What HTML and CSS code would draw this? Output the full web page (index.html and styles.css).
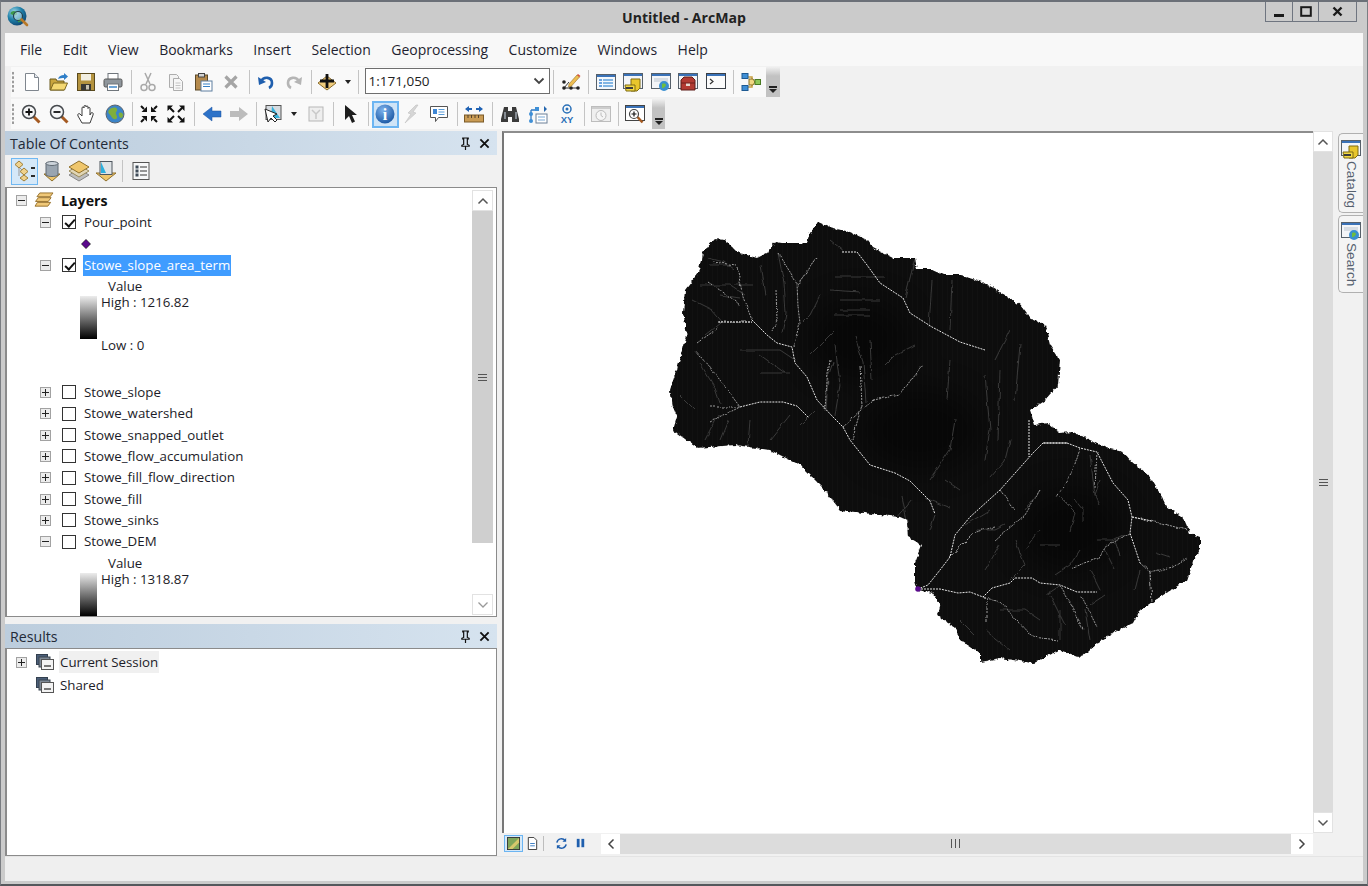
FILE: index.html
```html
<!DOCTYPE html>
<html lang="en">
<head>
<meta charset="utf-8">
<title>Untitled - ArcMap</title>
<link rel="stylesheet" href="styles.css">
</head>
<body>
<div class="window">
  <header class="titlebar">
    <div class="title-left">
      <svg class="logo" viewBox="0 0 22 22"><defs><radialGradient id="gl" cx=".35" cy=".3" r=".8"><stop offset="0" stop-color="#9fd8e8"/><stop offset=".5" stop-color="#1f80a8"/><stop offset="1" stop-color="#0d3d6a"/></radialGradient></defs><circle cx="10" cy="10" r="9.5" fill="url(#gl)"/><path d="M4 6c3-2 5-1 6 1s-2 3-4 2-3 0-2-3zM11 13c2-1 4 0 4 1s-3 3-4 2z" fill="#3d9a4a"/><circle cx="11" cy="10" r="4.5" fill="#cfeaf2" fill-opacity=".55" stroke="#23404f" stroke-width="1.2"/><path d="M14.5 13.5l5.5 5.5" stroke="#b8792a" stroke-width="2.6" stroke-linecap="round"/></svg>
    </div>
    <div class="title-text">Untitled - ArcMap</div>
    <div class="winbtns">
      <div class="wb wb-min"><svg viewBox="0 0 14 14"><rect x="2" y="9" width="10" height="3" fill="#1a1a1a"/></svg></div>
      <div class="wb wb-max"><svg viewBox="0 0 14 14"><rect x="2.2" y="2.2" width="9.6" height="8.6" fill="none" stroke="#1a1a1a" stroke-width="2"/></svg></div>
      <div class="wb wb-close"><svg viewBox="0 0 14 14"><path d="M2.5 2.5l8 8M10.500 2.500l-8 8" stroke="#1a1a1a" stroke-width="2.400"/></svg></div>
    </div>
  </header>

  <div class="client">
    <nav class="menubar">
      <span>File</span><span>Edit</span><span>View</span><span>Bookmarks</span><span>Insert</span><span>Selection</span><span>Geoprocessing</span><span>Customize</span><span>Windows</span><span>Help</span>
    </nav>

    <div class="toolrow">
      <div class="toolbar tb1">
        <div class="grip"></div>
        <div class="b"><svg viewBox="0 0 20 20"><path d="M3.500 1.500h9l4 4v13h-13z" fill="#fff" stroke="#7f868e"/><path d="M12.500 1.500v4h4" fill="#e4e8ee" stroke="#7f868e"/></svg></div>
        <div class="b"><svg viewBox="0 0 20 20"><path d="M1 7h6l1 2h7v9H1z" fill="#c9a53e" stroke="#6b5a1c"/><path d="M1.500 18l3-7h14l-3 7z" fill="#f4d872" stroke="#7b6620"/><path d="M9 7c1-3 3-4 6-4V1l4 3.500L15 8V6c-2 0-4 0-6 1z" fill="#2f7fc8"/></svg></div>
        <div class="b"><svg viewBox="0 0 20 20"><rect x="1.500" y="1.500" width="17" height="17" fill="#b4933f" stroke="#5a4a1e"/><rect x="5" y="2" width="10" height="6.500" fill="#f2efe2"/><rect x="5" y="12" width="10" height="6.500" fill="#3a3a36"/><rect x="10" y="13" width="3" height="4.500" fill="#c9c4b2"/></svg></div>
        <div class="b"><svg viewBox="0 0 20 20"><rect x="5" y="1.500" width="10" height="6" fill="#fff" stroke="#70767c"/><rect x="1" y="7" width="18" height="8" rx="1.500" fill="#8f969c" stroke="#555"/><rect x="4.500" y="12" width="11" height="6.500" fill="#fff" stroke="#70767c"/><path d="M6 15h8" stroke="#3c86c8" stroke-width="1.500"/></svg></div>
        <div class="sep s8"></div>
        <div class="b b5"><svg viewBox="0 0 20 20" class="off"><path d="M7 1l5 11M13 1L8 12" stroke="#a9a9a9" stroke-width="1.500"/><circle cx="6" cy="15.500" r="3" fill="none" stroke="#a9a9a9" stroke-width="1.500"/><circle cx="14" cy="15.500" r="3" fill="none" stroke="#a9a9a9" stroke-width="1.500"/></svg></div>
        <div class="b b5"><svg viewBox="0 0 20 20"><path d="M3.500 2.500h7l2 2v11h-9z" fill="#f3f3f3" stroke="#adadad"/><path d="M7.500 6.500h6l3 3v9h-9z" fill="#f7f7f7" stroke="#adadad"/><path d="M9.500 11h5M9.500 13.500h5M9.500 16h5" stroke="#c4c4c4"/></svg></div>
        <div class="b b5"><svg viewBox="0 0 20 20"><rect x="2.500" y="3" width="12" height="15" fill="#b58a4d" stroke="#5d4a2a"/><rect x="5.500" y="1.500" width="6" height="3.500" fill="#d4d4d4" stroke="#444"/><rect x="8" y="9" width="11" height="10" fill="#fff" stroke="#5e7fa0"/><path d="M10 12h7M10 14.500h7" stroke="#3480c6" stroke-width="1.200"/></svg></div>
        <div class="b b5"><svg viewBox="0 0 20 20"><path d="M4.500 4.500l11 11M15.500 4.500l-11 11" stroke="#a5a5a5" stroke-width="3.200"/></svg></div>
        <div class="sep s8"></div>
        <div class="b b5"><svg viewBox="0 0 20 20"><path d="M5 9c3-5 11-4 11 2 0 2-1 4-3 5" fill="none" stroke="#1f5fae" stroke-width="2.600"/><path d="M2 5l1 8 7-3z" fill="#1f5fae"/></svg></div>
        <div class="b b5"><svg viewBox="0 0 20 20"><path d="M15 9C12 4 4 5 4 11c0 2 1 4 3 5" fill="none" stroke="#b5b5b5" stroke-width="2.600"/><path d="M18 5l-1 8-7-3z" fill="#b5b5b5"/></svg></div>
        <div class="sep s6"></div>
        <div class="b"><svg viewBox="0 0 20 20"><path d="M10 4l9 7-9 7-9-7z" fill="#f0cc7c" stroke="#8a6c2c"/><path d="M10 2v14M3 9h14" stroke="#111" stroke-width="2.800"/></svg></div>
        <div class="drop"></div>
        <div class="sep s6"></div>
        <div class="combo"><span>1:171,050</span><svg viewBox="0 0 12 8"><path d="M1.500 1.500l4.500 4.500 4.500-4.500" fill="none" stroke="#444" stroke-width="1.800"/></svg></div>
        <div class="sep s75"></div>
        <div class="b"><svg viewBox="0 0 20 20"><path d="M2 16h16M3 16l5-6" stroke="#333"/><g fill="#222"><circle cx="3" cy="16" r="1.800"/><circle cx="10" cy="16" r="1.800"/><circle cx="17" cy="16" r="1.800"/><circle cx="3" cy="10" r="1.800"/></g><path d="M8 12L16 3l2.500 2-8 9-3 1z" fill="#eebe52" stroke="#936f1f" stroke-width=".6"/><path d="M16 3l1-1 2.500 2-1 1z" fill="#d94d36"/></svg></div>
        <div class="sep s8"></div>
        <div class="b b5"><svg viewBox="0 0 20 20"><rect x="0.500" y="2.500" width="19" height="15" fill="#f4f8fc" stroke="#56606a"/><rect x="1" y="3" width="18" height="2" fill="#3a72b8"/><path d="M3 8h3M3 11h3M3 14h3" stroke="#3e86d4" stroke-width="1.500"/><path d="M7 8h10M7 11h10M7 14h10" stroke="#5da0dc" stroke-width="1.300"/></svg></div>
        <div class="b b5"><svg viewBox="0 0 20 20"><rect x="0.500" y="1.500" width="19" height="15" fill="#f3f5f8" stroke="#56606a"/><rect x="1" y="2" width="18" height="2" fill="#3a72b8"/><path d="M8 7h9v9l-3 3H8z" fill="#e8c62c" stroke="#7e6a10"/><path d="M2 13h10v6H3z" fill="#f2d944" stroke="#7e6a10"/><rect x="3" y="15" width="7" height="2" fill="#3c3c3c"/></svg></div>
        <div class="b b5"><svg viewBox="0 0 20 20"><rect x="0.500" y="1.500" width="19" height="15" fill="#f3f5f8" stroke="#56606a"/><rect x="1" y="2" width="18" height="2" fill="#3a72b8"/><rect x="3" y="6" width="14" height="4" fill="#d7dde4"/><circle cx="13" cy="14" r="5" fill="#3a8fd0"/><path d="M11 12c2-1 4 0 4 1s-3 4-4 3z" fill="#6fbd3e"/></svg></div>
        <div class="b b5"><svg viewBox="0 0 20 20"><rect x="0.500" y="1.500" width="19" height="15" fill="#f3f5f8" stroke="#56606a"/><rect x="1" y="2" width="18" height="2" fill="#3a72b8"/><path d="M3 8l3-3h8l3 3v10H3z" fill="#b23a32" stroke="#5f1c18"/><rect x="8" y="11" width="4" height="3" fill="#e8d9d0"/><path d="M3 11h14" stroke="#6d1f1a"/></svg></div>
        <div class="b b5"><svg viewBox="0 0 20 20"><rect x="0.500" y="1.500" width="19" height="15" fill="#fbfbfb" stroke="#3a3f46"/><rect x="1" y="2" width="18" height="2" fill="#3a72b8"/><path d="M4 7l3 2.500L4 12" fill="none" stroke="#333" stroke-width="1.200"/></svg></div>
        <div class="sep s75"></div>
        <div class="b"><svg viewBox="0 0 20 20"><path d="M5 5h6v10H5M11 10h4" fill="none" stroke="#c8a040" stroke-width="1.500"/><rect x="1" y="1.500" width="6" height="5" fill="#3f8fd6" stroke="#1e5a92"/><rect x="1" y="13.500" width="6" height="5" fill="#3f8fd6" stroke="#1e5a92"/><path d="M8 7h4l2 3-2 3H8z" fill="#f2d884" stroke="#8a6e22"/><rect x="14" y="7.500" width="5.500" height="5" fill="#8fc85a" stroke="#4a7a22"/></svg></div>
      </div>
      <div class="chev"><span class="chev-g"></span></div>
    </div>

    <div class="toolrow">
      <div class="toolbar tb2">
        <div class="grip"></div>
        <div class="b b8"><svg viewBox="0 0 20 20"><path d="M12.500 12.500l6 6" stroke="#a55a22" stroke-width="3"/><circle cx="8" cy="8" r="6.500" fill="#f5f6f7" stroke="#45484c" stroke-width="1.500"/><path d="M8 4.500v7M4.500 8h7" stroke="#111" stroke-width="1.800"/></svg></div>
        <div class="b b8"><svg viewBox="0 0 20 20"><path d="M12.500 12.500l6 6" stroke="#a55a22" stroke-width="3"/><circle cx="8" cy="8" r="6.500" fill="#f5f6f7" stroke="#45484c" stroke-width="1.500"/><path d="M4.500 8h7" stroke="#111" stroke-width="1.800"/></svg></div>
        <div class="b b8"><svg viewBox="0 0 20 20"><path d="M5 19l-4-7c-1-2 1-3 2-2l2 2V4c0-1.500 2-1.500 2 0V2.500c0-1.500 2-1.500 2 0V3c0-1.500 2-1.500 2 0v1.500c0-1.500 2-1.500 2 0V11l1-2c1-1 3 0 2 2l-3 8z" fill="#fff" stroke="#3c3c3c" stroke-width="1"/></svg></div>
        <div class="b b8"><svg viewBox="0 0 20 20"><circle cx="10" cy="10" r="9" fill="#3b84c8" stroke="#59636e"/><path d="M4 6c3-3 7-3 8-1s-2 3-1 5 2 4 0 5-4-1-5-3-4-3-2-6zM14 9c2-1 4 0 4 2s-1 3-2 3-3-3-2-5z" fill="#7fae3c"/></svg></div>
        <div class="sep s7"></div>
        <div class="b"><svg viewBox="0 0 20 20"><path d="M8 8H2.500L8 2.500zM12 8h5.500L12 2.500zM8 12H2.500L8 17.500zM12 12h5.500L12 17.500z" fill="#111"/><path d="M2 2l3 3M18 2l-3 3M2 18l3-3M18 18l-3-3" stroke="#111" stroke-width="2"/></svg></div>
        <div class="b"><svg viewBox="0 0 20 20"><path d="M1.500 1.500H7L1.500 7zM18.500 1.500H13L18.500 7zM1.500 18.500H7L1.500 13zM18.500 18.500H13L18.500 13z" fill="#111"/><path d="M4 4l4 4M16 4l-4 4M4 16l4-4M16 16l-4-4" stroke="#111" stroke-width="2"/></svg></div>
        <div class="sep s9"></div>
        <div class="b"><svg viewBox="0 0 20 20"><path d="M1 10l9-7v4h9v6h-9v4z" fill="#2d72c8" stroke="#1f55a0" stroke-width=".5"/></svg></div>
        <div class="b"><svg viewBox="0 0 20 20"><path d="M19 10l-9-7v4H1v6h9v4z" fill="#bcbcbc"/></svg></div>
        <div class="sep s7"></div>
        <div class="b"><svg viewBox="0 0 20 20"><rect x="3" y="1.500" width="15" height="14" fill="#d6dbe0" stroke="#555"/><path d="M9 2l8 12h-9z" fill="#38b2dc"/><path d="M2 5l3 13 3-4 4 4 2-2-4-4 4-2z" fill="#fff" stroke="#222"/></svg></div>
        <div class="drop"></div>
        <div class="b b-clear"><svg viewBox="0 0 20 20"><rect x="3" y="3" width="14" height="14" fill="#eee" stroke="#b7b7b7"/><path d="M6 6l4 4 4-4M10 10v5" stroke="#c8c8c8" fill="none" stroke-width="1.500"/></svg></div>
        <div class="sep s7"></div>
        <div class="b"><svg viewBox="0 0 20 20"><path d="M5 1v15l4-4 3 7 3-1.500-3-6.500h5z" fill="#1d1d1d"/></svg></div>
        <div class="sep s8"></div>
        <div class="b active"><svg viewBox="0 0 20 20"><defs><radialGradient id="ib" cx=".4" cy=".3" r=".8"><stop offset="0" stop-color="#7db2ec"/><stop offset="1" stop-color="#12509e"/></radialGradient></defs><circle cx="10" cy="10" r="9.500" fill="url(#ib)"/><text x="10" y="15.500" class="info">i</text></svg></div>
        <div class="b"><svg viewBox="0 0 20 20"><path d="M14 1L6 9l3 1-6 9 11-10-3-1 5-7z" fill="#d6d6d6" stroke="#c1c1c1" stroke-width=".6"/></svg></div>
        <div class="b"><svg viewBox="0 0 20 20"><path d="M1.500 2.500h17v11h-9l-3 4v-4h-5z" fill="#fff" stroke="#555"/><rect x="4" y="5" width="4" height="5" fill="#3e86d4"/><path d="M9.500 5.500h6M9.500 8h6M9.500 10.500h6" stroke="#5a9cd8"/></svg></div>
        <div class="sep s8"></div>
        <div class="b"><svg viewBox="0 0 20 20"><path d="M1 5l4-3v2h3v2H5v2zM19 5l-4-3v2h-3v2h3v2z" fill="#1f62b4"/><rect x="0.500" y="11" width="19" height="7" fill="#c99b54" stroke="#7a5a28"/><path d="M4 11v3M7.500 11v3M11 11v3M14.500 11v3" stroke="#53402a"/></svg></div>
        <div class="sep s8"></div>
        <div class="b b85"><svg viewBox="0 0 20 20"><path d="M4 3h4v4h4V3h4l3 12v3h-7v-5H8v5H1v-3z" fill="#3a3a3a"/><path d="M4 8h2v7H4zM15 8h2v7h-2z" fill="#858b92"/></svg></div>
        <div class="b b85"><svg viewBox="0 0 20 20"><rect x="8" y="10" width="11" height="9" fill="#fff" stroke="#6c8098"/><path d="M10 13h7M10 16h7" stroke="#7aa9d6"/><path d="M3 6v11M3 6h5" fill="none" stroke="#2f78c2" stroke-width="1.300"/><rect x="7" y="3" width="4" height="4" fill="#3f8fd6"/><circle cx="3" cy="10" r="2" fill="#3f8fd6"/><circle cx="3" cy="17" r="2" fill="#3f8fd6"/><path d="M11 5h5V2l3 3-3 3V5z" fill="#2566ae"/></svg></div>
        <div class="b b85"><svg viewBox="0 0 20 20"><circle cx="10" cy="5" r="4" fill="none" stroke="#2a70b8" stroke-width="1.500"/><circle cx="10" cy="5" r="1.500" fill="#2a70b8"/><text x="10" y="19" class="xy">XY</text></svg></div>
        <div class="sep s6"></div>
        <div class="b"><svg viewBox="0 0 20 20"><rect x="0.500" y="2.500" width="19" height="15" fill="#efefef" stroke="#bdbdbd"/><rect x="1" y="3" width="18" height="2" fill="#cdcdcd"/><circle cx="10" cy="11.500" r="5" fill="#f5f5f5" stroke="#bbb"/><path d="M10 8.500v3l2 1.500" fill="none" stroke="#bbb"/></svg></div>
        <div class="sep s75"></div>
        <div class="b"><svg viewBox="0 0 20 20"><rect x="0.500" y="1.500" width="19" height="15" fill="#fff" stroke="#444"/><rect x="1" y="2" width="18" height="2" fill="#3a72b8"/><path d="M12.500 13l5 5.500" stroke="#a55a22" stroke-width="2.500"/><circle cx="9" cy="10" r="4.500" fill="#fff" stroke="#444" stroke-width="1.200"/><path d="M9 7.500v5M6.500 10h5" stroke="#111" stroke-width="1.200"/></svg></div>
      </div>
      <div class="chev chev2"><span class="chev-g"></span></div>
    </div>

    <div class="main">
      <aside class="dock">
        <section class="panel">
          <div class="ptitle"><span>Table Of Contents</span>
            <svg class="pin" viewBox="0 0 12 14"><path d="M3 1h6v1H8v6l2 1v1H2V9l2-1V2H3zM6 10v4" fill="none" stroke="#111" stroke-width="1.300"/></svg>
            <svg class="px" viewBox="0 0 12 12"><path d="M1.500 1.500l9 9M10.500 1.500l-9 9" stroke="#111" stroke-width="2"/></svg>
          </div>
          <div class="ptools">
            <div class="pb pb-on"><svg viewBox="0 0 22 22"><path d="M5 7l5 5M5 7v9" stroke="#999"/><path d="M5 1l4 3.500L5 8 1 4.500z" fill="#f0d28c" stroke="#a08038"/><path d="M10 8l4 3.500-4 3.500-4-3.500z" fill="#f0d28c" stroke="#a08038"/><path d="M10 15l4 3-4 3-4-3z" fill="#f0d28c" stroke="#a08038"/><path d="M17 8h4M17 16h4" stroke="#2a2a2a" stroke-width="1.800"/></svg></div>
            <div class="pb"><svg viewBox="0 0 22 22"><path d="M3 14l8 7 8-7z" fill="#efc66c" stroke="#90712c"/><path d="M5 3h12v12c-2 2-10 2-12 0z" fill="#9aa5b0" stroke="#5f6972"/><ellipse cx="11" cy="3.500" rx="6" ry="2" fill="#cdd4db" stroke="#5f6972"/></svg></div>
            <div class="pb"><svg viewBox="0 0 22 22"><path d="M11 9l10 6-10 6-10-6z" fill="#bdbdbd" stroke="#888"/><path d="M11 5l10 6-10 6-10-6z" fill="#e0d5b5" stroke="#9a8a5a"/><path d="M11 1l10 6-10 6L1 7z" fill="#efc66c" stroke="#90712c"/></svg></div>
            <div class="pb"><svg viewBox="0 0 22 22"><path d="M1 13l10 8 10-8z" fill="#efc66c" stroke="#90712c"/><rect x="5" y="1.500" width="12" height="13" fill="#dfe3e6" stroke="#4e565e"/><path d="M6 2l5 11H6z" fill="#2cb0de"/></svg></div>
            <div class="psep"></div>
            <div class="pb"><svg viewBox="0 0 22 22"><rect x="3" y="2.500" width="16" height="17" fill="#f7f8f9" stroke="#555"/><path d="M10 7h7M10 11h7M10 15h7" stroke="#333"/><g fill="#3e4b58"><rect x="5.500" y="5.500" width="3" height="3"/><rect x="5.500" y="9.500" width="3" height="3"/><rect x="5.500" y="13.500" width="3" height="3"/></g></svg></div>
          </div>
          <div class="treebox toc">
            <div class="tree">
              <div class="row r-layers"><i class="ex minus"></i><svg class="licon" viewBox="0 0 22 18"><path d="M6 1h14l-3 4H3z" fill="#f0c878" stroke="#96702a"/><path d="M4.500 6H18l-3 4H1.500z" fill="#f0c878" stroke="#96702a"/><path d="M3.500 11h14l-3 4H1z" fill="#f0c878" stroke="#96702a"/></svg><b>Layers</b></div>
              <div class="row l2"><i class="ex minus"></i><i class="cb on"></i><span>Pour_point</span></div>
              <div class="row sym"><i class="dot"></i></div>
              <div class="row l2"><i class="ex minus"></i><i class="cb on"></i><span class="sel">Stowe_slope_area_term</span></div>
              <div class="legend">
                <div class="lg-v">Value</div>
                <div class="lg-b"><i class="ramp"></i><div class="lg-t"><div>High : 1216.82</div><div class="low">Low : 0</div></div></div>
              </div>
              <div class="row l2"><i class="ex plus"></i><i class="cb"></i><span>Stowe_slope</span></div>
              <div class="row l2"><i class="ex plus"></i><i class="cb"></i><span>Stowe_watershed</span></div>
              <div class="row l2"><i class="ex plus"></i><i class="cb"></i><span>Stowe_snapped_outlet</span></div>
              <div class="row l2"><i class="ex plus"></i><i class="cb"></i><span>Stowe_flow_accumulation</span></div>
              <div class="row l2"><i class="ex plus"></i><i class="cb"></i><span>Stowe_fill_flow_direction</span></div>
              <div class="row l2"><i class="ex plus"></i><i class="cb"></i><span>Stowe_fill</span></div>
              <div class="row l2"><i class="ex plus"></i><i class="cb"></i><span>Stowe_sinks</span></div>
              <div class="row l2"><i class="ex minus"></i><i class="cb"></i><span>Stowe_DEM</span></div>
              <div class="legend">
                <div class="lg-v">Value</div>
                <div class="lg-b"><i class="ramp"></i><div class="lg-t"><div>High : 1318.87</div></div></div>
              </div>
            </div>
            <div class="vbar vbar-toc">
              <div class="sb-btn"><svg viewBox="0 0 12 8"><path d="M1.500 6.500L6 2l4.500 4.500" fill="none" stroke="#555" stroke-width="1.500"/></svg></div>
              <div class="thumb"><span class="grip3"></span></div>
              <div class="sb-rest"></div>
              <div class="sb-btn"><svg viewBox="0 0 12 8"><path d="M1.500 1.500L6 6l4.500-4.500" fill="none" stroke="#999" stroke-width="1.300"/></svg></div>
            </div>
          </div>
        </section>
        <section class="panel panel-res">
          <div class="ptitle"><span>Results</span>
            <svg class="pin" viewBox="0 0 12 14"><path d="M3 1h6v1H8v6l2 1v1H2V9l2-1V2H3zM6 10v4" fill="none" stroke="#111" stroke-width="1.300"/></svg>
            <svg class="px" viewBox="0 0 12 12"><path d="M1.500 1.500l9 9M10.500 1.500l-9 9" stroke="#111" stroke-width="2"/></svg>
          </div>
          <div class="treebox results">
            <div class="rrow"><i class="ex plus"></i><svg class="ricon" viewBox="0 0 18 16"><rect x="0.500" y="0.500" width="11" height="10" fill="#4a5e78" stroke="#33404f"/><rect x="3" y="3" width="11" height="10" fill="#7f8a96" stroke="#3a4550"/><rect x="5.500" y="5.500" width="12" height="10" fill="#f3f3f3" stroke="#555"/><path d="M8 12h7" stroke="#777" stroke-width="2"/></svg><span class="cur">Current Session</span></div>
            <div class="rrow"><i class="ex none"></i><svg class="ricon" viewBox="0 0 18 16"><rect x="0.500" y="0.500" width="11" height="10" fill="#4a5e78" stroke="#33404f"/><rect x="3" y="3" width="11" height="10" fill="#7f8a96" stroke="#3a4550"/><rect x="5.500" y="5.500" width="12" height="10" fill="#f3f3f3" stroke="#555"/><path d="M8 12h7" stroke="#777" stroke-width="2"/></svg><span>Shared</span></div>
          </div>
        </section>
      </aside>

      <div class="centre">
        <div class="maprow">
          <div class="map">
            <svg class="mapsvg" viewBox="504 133 809 700">
              <defs>
                <filter id="rough" x="-5%" y="-5%" width="110%" height="110%"><feTurbulence type="fractalNoise" baseFrequency="0.22" numOctaves="2" seed="4"/><feDisplacementMap in="SourceGraphic" scale="5" xChannelSelector="R" yChannelSelector="G"/></filter>
                <filter id="wig" x="-5%" y="-5%" width="110%" height="110%"><feTurbulence type="fractalNoise" baseFrequency="0.1" numOctaves="2" seed="9"/><feDisplacementMap in="SourceGraphic" scale="4" xChannelSelector="G" yChannelSelector="R"/></filter>
                <filter id="soft" x="-60%" y="-60%" width="220%" height="220%"><feGaussianBlur stdDeviation="16"/></filter>
                <pattern id="hatch" width="5" height="5" patternUnits="userSpaceOnUse" patternTransform="rotate(90)"><path d="M0 2.500h5" stroke="#141414" stroke-width="1"/></pattern>
                <clipPath id="shed"><path d="M818 222L830 227 850 232 867 240 873 248 893 258 915 258 917 269 930 269 943 275 960 275 985 283 1005 295 1020 305 1030 318 1045 325 1050 345 1060 360 1058 385 1045 400 1030 410 1035 425 1048 423 1060 433 1073 432 1090 440 1107 448 1123 452 1133 463 1150 477 1162 497 1167 508 1183 517 1190 533 1200 537 1200 548 1193 563 1187 580 1160 597 1140 610 1133 623 1113 633 1097 643 1080 658 1060 650 1033 663 1000 658 980 662 980 653 960 640 955 628 937 615 940 603 933 593 918 590 915 580 915 563 922 545 908 537 907 520 900 517 880 515 840 510 825 490 800 465 770 450 735 445 697 448 673 430 677 417 673 407 670 390 682 353 687 335 683 313 685 290 698 273 703 252 715 239 725 240 737 252 757 258 767 253 775 242 782 243 807 243 810 233z"/></clipPath>
              </defs>
              <path filter="url(#rough)" fill="#0d0d0d" d="M818 222L830 227 850 232 867 240 873 248 893 258 915 258 917 269 930 269 943 275 960 275 985 283 1005 295 1020 305 1030 318 1045 325 1050 345 1060 360 1058 385 1045 400 1030 410 1035 425 1048 423 1060 433 1073 432 1090 440 1107 448 1123 452 1133 463 1150 477 1162 497 1167 508 1183 517 1190 533 1200 537 1200 548 1193 563 1187 580 1160 597 1140 610 1133 623 1113 633 1097 643 1080 658 1060 650 1033 663 1000 658 980 662 980 653 960 640 955 628 937 615 940 603 933 593 918 590 915 580 915 563 922 545 908 537 907 520 900 517 880 515 840 510 825 490 800 465 770 450 735 445 697 448 673 430 677 417 673 407 670 390 682 353 687 335 683 313 685 290 698 273 703 252 715 239 725 240 737 252 757 258 767 253 775 242 782 243 807 243 810 233z"/>
              <g clip-path="url(#shed)">
                <rect x="660" y="210" width="560" height="460" fill="url(#hatch)" opacity=".6"/>
                <g class="darks" filter="url(#soft)"><ellipse cx="860" cy="340" rx="50" ry="40"/><ellipse cx="1070" cy="530" rx="50" ry="40"/><ellipse cx="920" cy="430" rx="60" ry="40"/></g>
                <g class="faint" filter="url(#wig)">
                  <path d="M708 258l16 4 10 8M708 265h22M700 285h30l15 10M692 300l20 10 12 14M705 335l15-12M720 295l20 3M735 285h18M760 265l5 30M778 253l6 30 2 30-4 20"/>
                  <path d="M817 258l-10 14-10 12M830 290l30 2M835 277h50M840 300h40M835 315h35M870 310l-30 0M820 295l-10 20-10 10M835 330l-25 25M830 240l15 12"/>
                  <path d="M855 337l8 25 3 40M835 345l5 40-5 30M833 362l-5 15-2 35M870 340l2 40M885 365l10-10 20-10M915 258l-10 40M932 280l-3 47M952 280l-2 50M1010 330l-15 30M1020 345l-5 55M985 375l5 55 -5 30M950 360l-3 40M1010 440l-5 20-15 18M1000 370l-2 70M955 420l-5 30-20 30"/>
                  <path d="M700 363l15 25 5 15M680 395l15 15M705 440l10-20M720 440l8-20M750 420l-2 25M770 440l20-25M800 425l15-15M760 355l25 18M740 350h40l15 10M760 373h30"/>
                  <path d="M902 496l5 25M912 500l-15 18M925 498l25 10M935 515l-5 15M960 490l-15-10M990 510l-25 15M1040 490l-15 20M975 530h20l10-5M1000 545l-15 25M1015 540l10 25-15 15M1040 530l-15 20M1060 497l15 15 -5 20M1075 500l8 10v12M1090 455l5 40M1100 480l-5 15 5 10M1060 545h-20M1080 550l-10 15-15 10M1097 540l15 0 10-5M1120 555l-5-15M1155 552l15 5M1135 590l5-20M1150 590l0-20M1060 585l-15 10M1090 605l15-10M1115 570l-10-20M1100 590l-10-20"/>
                  <path d="M1000 610h25l15 10M985 630l15 12 10 8M1060 610l0 30M1050 595l15 30M960 620l15 15M1085 610l5 30"/>
                </g>
                <g class="mid" filter="url(#wig)">
                  <path d="M718 322h34M697 343l21-15M737 267l6 30 9 23M713 262l22 3M708 282l22 15 10 8"/>
                  <path d="M778 253l19 30 1 24 2 16-7 24M817 258l-20 27M776 290l1 30-5 12"/>
                  <path d="M695 350l25 30 20 27M710 407h30M710 422l20-10 10-5"/>
                  <path d="M873 400l27-5 13-18 10-13M843 427l30-27M830 360l-3 20-2 30M860 365l2 40 -10 35"/>
                  <path d="M1080 448l-7 22-16 27M1097 452l-2 35M1132 517l28 6 27 7M1130 533l-20 10-10 15-30 10M1140 563l10 9 23-5 14-9M1150 572l2 30M987 597v25M983 597l17 5 33 35 25 3M1060 585l13 22 10 23M1082 597l15 30M950 557l25-25 20-5M1000 490l15 20M1040 490l-15 25-30 25"/>
                </g>
                <g class="main-s">
                  <path d="M842 252h15l10 13 13 18 23 15 7 15 22 14 28 15 25 8"/>
                  <path d="M752 320l15 15 10 8 15 4 3 16 12 14 10 23 16 17 10 10 7 13 20 25 25 8 15 8 20 20 5 13"/>
                  <path d="M1029 420v37M1067 443h-24l-10 10-33 37-30 27-15 18-5 22-10 13-12 15-10 4"/>
                  <path d="M1043 443h24l13 5 17 4 16 31 15 17 4 17-2 16 10 30"/>
                  <path d="M918 589h22l18 4 12-1 13 5 9-9 18-5 5-5h17l8 5 20 2 17 7h20"/>
                  <path d="M740 407l20-5h23l14 4 12 12M1132 517l20 4M718 322h34"/>
                </g>
              </g>
              <circle cx="918" cy="589" r="2.800" fill="#5a0a8c"/>
            </svg>
          </div>
          <div class="vbar vbar-map">
            <div class="sb-btn"><svg viewBox="0 0 12 8"><path d="M1.500 6.500L6 2l4.500 4.500" fill="none" stroke="#555" stroke-width="1.500"/></svg></div>
            <div class="thumb"><span class="grip3"></span></div>
            <div class="sb-btn"><svg viewBox="0 0 12 8"><path d="M1.500 1.500L6 6l4.500-4.500" fill="none" stroke="#555" stroke-width="1.500"/></svg></div>
          </div>
        </div>
        <div class="hbarrow">
          <div class="vb vb-on"><svg viewBox="0 0 14 14"><rect x="0.500" y="0.500" width="13" height="13" fill="#7fa65a" stroke="#333"/><path d="M1 13L13 1v5L6 13z" fill="#d7c86c"/></svg></div>
          <div class="vb"><svg viewBox="0 0 14 14"><path d="M2.500 .5h6l3 3v10h-9z" fill="#fff" stroke="#333"/><path d="M4.500 7h5M4.500 9.500h5" stroke="#3478c0"/></svg></div>
          <div class="hsep"></div>
          <div class="vb vb-r"><svg viewBox="0 0 14 14"><path d="M2 6a5 5 0 0 1 9-2M12 8a5 5 0 0 1-9 2" fill="none" stroke="#1f5fae" stroke-width="1.600"/><path d="M12 1v4H8zM2 13V9h4z" fill="#1f5fae"/></svg></div>
          <div class="vb vb-p"><svg viewBox="0 0 14 14"><rect x="3" y="2" width="3" height="9" fill="#1f5fae"/><rect x="8" y="2" width="3" height="9" fill="#1f5fae"/></svg></div>
          <div class="hscroll">
            <div class="hs-btn"><svg viewBox="0 0 8 12"><path d="M6.500 1.500L2 6l4.500 4.500" fill="none" stroke="#444" stroke-width="1.500"/></svg></div>
            <div class="hs-track"><span class="grip3h"></span></div>
            <div class="hs-btn hs-end"><svg viewBox="0 0 8 12"><path d="M1.500 1.500L6 6l-4.500 4.500" fill="none" stroke="#444" stroke-width="1.500"/></svg></div>
          </div>
        </div>
      </div>

      <div class="sidetabs">
        <div class="stab st-cat"><svg viewBox="0 0 20 20"><rect x="0.500" y="1.500" width="19" height="15" fill="#f3f5f8" stroke="#56606a"/><rect x="1" y="2" width="18" height="2" fill="#3a72b8"/><path d="M8 7h9v9l-3 3H8z" fill="#e8c62c" stroke="#7e6a10"/><path d="M2 13h10v6H3z" fill="#f2d944" stroke="#7e6a10"/><rect x="3" y="15" width="7" height="2" fill="#3c3c3c"/></svg><span>Catalog</span></div>
        <div class="stab st-sea"><svg viewBox="0 0 20 20"><rect x="0.500" y="1.500" width="19" height="15" fill="#f3f5f8" stroke="#56606a"/><rect x="1" y="2" width="18" height="2" fill="#3a72b8"/><rect x="3" y="6" width="14" height="4" fill="#d7dde4"/><circle cx="13" cy="14" r="5" fill="#3a8fd0"/><path d="M11 12c2-1 4 0 4 1s-3 4-4 3z" fill="#6fbd3e"/></svg><span>Search</span></div>
      </div>
    </div>

    <footer class="statusbar"></footer>
  </div>
</div>
</body>
</html>
```

FILE: styles.css
```css
* { box-sizing: border-box; }
html, body { margin: 0; height: 100%; overflow: hidden; }
body { font-family: "Open Sans", "Noto Sans", "Liberation Sans", sans-serif; font-size: 13.3px; color: #1c1c28; background: #cbcbcb; }

.window { width: 1368px; height: 886px; display: flex; flex-direction: column; background: #cbcbcb; border-top: 2px solid #6b7078; border-bottom: 2px solid #55585c; border-left: 1px solid #7a7d82; border-right: 1px solid #7a7d82; padding: 0 4px 3px; }

.titlebar { height: 31px; flex: none; display: grid; grid-template-columns: 1fr auto 1fr; }
.title-left { display: flex; align-items: flex-start; padding: 4px 0 0 2px; }
.logo { width: 22px; height: 22px; }
.title-text { font-weight: 700; font-size: 14.1px; line-height: 31px; color: #222; }
.winbtns { display: flex; justify-content: flex-end; align-items: flex-start; padding-right: 6px; }
.wb { height: 20px; border: 1px solid #6f7580; border-top: 0; margin-left: -1px; display: flex; align-items: center; justify-content: center; }
.wb svg { width: 14px; height: 14px; }
.wb-min { width: 28px; }
.wb-max { width: 27px; }
.wb-close { width: 39px; }

.client { flex: 1; display: flex; flex-direction: column; background: #f1f1f1; min-height: 0; }

.menubar { height: 33px; flex: none; display: flex; align-items: center; background: #f8f8f8; padding-left: 15px; gap: 20.5px; font-size: 14px; color: #1f1f30; }

.toolrow { height: 32px; flex: none; display: flex; align-items: stretch; padding: 1px 0; }
.toolbar { display: flex; align-items: center; background: #f9f9f9; margin-left: 6px; }
.tb1 { width: 755px; }
.tb2 { width: 641px; }
.grip { width: 7.5px; align-self: center; height: 22px; background-image: radial-gradient(circle, #9a9a9a 1px, transparent 1.2px); background-size: 4px 4.4px; background-repeat: repeat-y; flex: none; }
.tb2 .grip { width: 5.5px; }
.b { width: 27px; height: 27px; flex: none; display: flex; align-items: center; justify-content: center; border: 1px solid transparent; }
.b svg { width: 20px; height: 20px; display: block; }
.b5 { width: 27.5px; }
.b8 { width: 28px; }
.b85 { width: 28.5px; }
.b-clear { margin-left: 2px; }
.active { background: #cfe4f7; border: 2px solid #6cb5f2; }
.sep { flex: none; height: 24px; position: relative; }
.sep::after { content: ""; position: absolute; left: 50%; top: 0; bottom: 0; width: 1px; background: #c4c4c4; }
.s6 { width: 6px; }
.s7 { width: 7px; }
.s75 { width: 7.5px; }
.s8 { width: 8px; }
.s9 { width: 9px; }
.drop { width: 14px; flex: none; display: flex; align-items: center; justify-content: center; }
.drop::after { content: ""; border: 3.5px solid transparent; border-top: 4px solid #222; border-bottom: 0; }
.combo { width: 185px; height: 26px; flex: none; margin: 0 0 3px 4px; background: #fff; border: 1px solid #6e6e6e; display: flex; align-items: center; justify-content: space-between; padding: 0 4px 0 3px; font-size: 13.5px; color: #222; }
.combo svg { width: 12px; height: 8px; }
.chev { width: 14px; background: linear-gradient(#f0f0f0, #c2c2c2 30%, #c2c2c2); display: flex; align-items: flex-end; justify-content: center; padding-bottom: 4px; flex: none; }
.chev2 { width: 13px; }
.chev-g { display: block; width: 8px; height: 7px; border-top: 2px solid #222; position: relative; }
.chev-g::after { content: ""; position: absolute; left: 0; top: 1px; border: 4px solid transparent; border-top: 4px solid #222; border-bottom: 0; }

.main { flex: 1; display: flex; min-height: 0; }
.dock { width: 492px; flex: none; display: flex; flex-direction: column; padding-top: 1px; }
.panel { display: flex; flex-direction: column; }
.panel-res { margin-top: 7px; flex: 1; min-height: 0; }
.ptitle { height: 24px; flex: none; background: linear-gradient(90deg, #bccddd, #d6e3ef); display: flex; align-items: center; padding: 0 5px; font-size: 14.2px; color: #222a38; }
.ptitle span { flex: 1; }
.pin { width: 11px; height: 13px; margin-right: 8px; }
.px { width: 11px; height: 11px; margin-right: 2px; }
.ptools { height: 32px; flex: none; display: flex; align-items: center; padding-left: 6px; background: #f1f1f1; }
.pb { width: 27px; height: 27px; display: flex; align-items: center; justify-content: center; border: 1px solid transparent; flex: none; }
.pb svg { width: 22px; height: 22px; }
.pb-on { background: #d5e8f8; border: 1px solid #70b8f2; }
.psep { width: 8px; height: 22px; position: relative; flex: none; }
.psep::after { content: ""; position: absolute; left: 3px; top: 0; bottom: 0; width: 1px; background: #c4c4c4; }

.treebox { background: #fff; border: 1px solid #8b8b8b; border-left: 2px solid #8b8b8b; display: flex; overflow: hidden; }
.toc { height: 430px; }
.results { flex: 1; flex-direction: column; padding-top: 2px; }
.tree { flex: 1; min-width: 0; overflow: hidden; padding-top: 2px; }
.row { height: 21.33px; display: flex; align-items: center; white-space: nowrap; padding-top: 1px; }
.r-layers { padding: 0 0 0 9px; }
.r-layers b { font-weight: 700; font-size: 14.2px; margin-left: 6px; color: #111; }
.licon { width: 21px; height: 17px; margin-left: 7px; }
.l2 { padding-left: 33px; }
.l2 .cb { margin-left: 11px; }
.l2 span { margin-left: 7px; padding: 0 1px; line-height: 21px; }
.ex { display: inline-block; flex: none; width: 11px; height: 11px; border: 1px solid #a2a2a2; background: #ececec; position: relative; }
.ex.minus::after, .ex.plus::after { content: ""; position: absolute; left: 1px; right: 1px; top: 4px; height: 1px; background: #222; }
.ex.plus::before { content: ""; position: absolute; top: 1px; bottom: 1px; left: 4px; width: 1px; background: #222; }
.ex.none { visibility: hidden; }
.cb { display: inline-block; flex: none; width: 14px; height: 14px; border: 1.500px solid #333; background: #fff; position: relative; }
.cb.on::after { content: ""; position: absolute; left: 3.500px; top: .5px; width: 4px; height: 8px; border: solid #111; border-width: 0 2px 2px 0; transform: rotate(42deg); }
.sel { background: #3f9cff; color: #fff; }
.sym { padding-left: 76px; }
.dot { width: 6px; height: 6px; background: #5a0a8c; transform: rotate(45deg); box-shadow: 0 0 0 .5px #333; }
.legend { height: 106px; padding-left: 73px; line-height: 16px; }
.lg-v { padding-left: 28px; padding-top: 3px; }
.lg-b { display: flex; }
.ramp { display: block; width: 17px; height: 43px; margin-top: 2px; background: linear-gradient(#ececec, #000); flex: none; }
.lg-t { margin-left: 4px; }
.low { margin-top: 27px; }

.vbar { width: 21px; flex: none; display: flex; flex-direction: column; background: #f6f6f6; }
.vbar-toc { margin: 2px 3px 1px 0; }
.sb-btn { height: 21px; flex: none; background: #fff; display: flex; align-items: center; justify-content: center; border: 1px solid #e2e2e2; }
.sb-btn svg { width: 12px; height: 8px; }
.thumb { height: 332px; background: #cfcfcf; display: flex; align-items: center; justify-content: center; flex: none; }
.vbar-map .thumb { flex: 1; height: auto; background: #dcdcdc; }
.sb-rest { flex: 1; background: #fff; }
.grip3 { width: 9px; height: 7px; border-top: 1px solid #555; border-bottom: 1px solid #555; position: relative; display: block; }
.grip3::after { content: ""; position: absolute; left: 0; right: 0; top: 2px; height: 1px; background: #555; }
.rrow { height: 22.5px; flex: none; display: flex; align-items: center; padding-left: 9px; white-space: nowrap; }
.ricon { width: 18px; height: 16px; margin-left: 9px; }
.rrow span { margin-left: 5px; padding: 0 1px; line-height: 22px; }
.cur { background: #f0f0f0; }

.centre { flex: 1; min-width: 0; display: flex; flex-direction: column; margin-left: 5px; padding-top: 1px; }
.maprow { flex: 1; min-height: 0; display: flex; }
.map { flex: 1; min-width: 0; background: #fff; border-top: 2px solid #8d8d8d; border-left: 2px solid #777; overflow: hidden; }
.mapsvg { width: 809px; height: 700px; display: block; }
.darks { fill: #000; opacity: .45; }
.faint { fill: none; stroke: #3a3a3a; stroke-width: 1; }
.mid { fill: none; stroke: #9c9c9c; stroke-width: 1; stroke-dasharray: 2 1; }
.main-s { fill: none; stroke: #e6e6e6; stroke-width: 1; stroke-dasharray: 2 1; }
.info { font-family: "Liberation Serif", serif; font-weight: 700; font-size: 16px; fill: #fff; text-anchor: middle; }
.xy { font-family: "Liberation Sans", sans-serif; font-weight: 700; font-size: 9.500px; fill: #2a70b8; text-anchor: middle; }
.vbar-map { width: 20px; background: #dcdcdc; }

.hbarrow { height: 21px; flex: none; display: flex; align-items: center; background: #f1f1f1; margin-bottom: 2px; }
.vb { width: 19px; height: 17px; flex: none; display: flex; align-items: center; justify-content: center; border: 1px solid transparent; }
.vb svg { width: 13px; height: 13px; }
.vb-on { margin-left: 2px; background: #d5e8f8; border: 1px solid #6cb5f2; }
.hsep { width: 1px; height: 15px; background: #bdbdbd; margin: 0 0 0 1px; flex: none; }
.vb-r { margin-left: 8px; }
.hscroll { flex: none; width: 712px; margin-left: 11px; height: 20px; display: flex; background: #dcdcdc; }
.hs-btn { width: 19px; flex: none; background: #fff; display: flex; align-items: center; justify-content: center; }
.hs-btn svg { width: 8px; height: 12px; }
.hs-end { width: 22px; }
.hs-track { flex: 1; display: flex; align-items: center; justify-content: center; }
.grip3h { width: 9px; height: 9px; border-left: 1px solid #555; border-right: 1px solid #555; position: relative; display: block; }
.grip3h::after { content: ""; position: absolute; top: 0; bottom: 0; left: 3px; width: 1px; background: #555; }

.sidetabs { width: 25px; flex: none; margin-left: 5px; padding-top: 3px; display: flex; flex-direction: column; gap: 2px; }
.stab { background: #f4f4f4; border: 1px solid #b0b0b0; border-right: 0; border-radius: 5px 0 0 5px; display: flex; flex-direction: column; align-items: center; padding-top: 5px; color: #55606e; font-size: 13.5px; font-family: "Liberation Sans", sans-serif; }
.stab svg { width: 20px; height: 20px; flex: none; }
.stab span { writing-mode: vertical-rl; margin-top: 2px; letter-spacing: .1px; }
.st-cat { height: 80px; }
.st-sea { height: 78px; }

.statusbar { height: 25px; flex: none; background: #efefef; border-top: 1px solid #e4e4e4; }
```
